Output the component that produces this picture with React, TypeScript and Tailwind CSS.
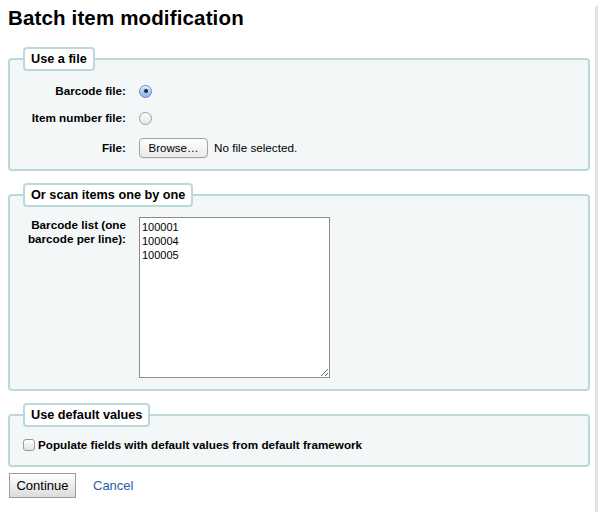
import React from "react";

const font = { fontFamily: '"Liberation Sans", Arial, Helvetica, sans-serif' };

function Legend({ children }: { children: React.ReactNode }) {
  return (
    <legend className="ml-0 rounded-[4px] border-2 border-[#b9d9da] bg-white px-[6px] py-[3px] text-[12.7px] font-bold leading-[14px] text-black">
      {children}
    </legend>
  );
}

function Radio({ checked }: { checked?: boolean }) {
  if (checked) {
    return (
      <span className="flex h-[13px] w-[13px] items-center justify-center rounded-full border border-[#5d86c9] bg-gradient-to-b from-[#cfe0f7] to-[#8fb5ea] shadow-[inset_0_1px_1px_rgba(255,255,255,0.8)]">
        <span className="h-[4px] w-[4px] rounded-full bg-[#1d2a3d]" />
      </span>
    );
  }
  return (
    <span className="block h-[13px] w-[13px] rounded-full border border-[#9b9b9b] bg-gradient-to-b from-[#ffffff] to-[#e6e6e6]" />
  );
}

export default function App() {
  return (
    <div
      className="min-h-[512px] w-[598px] border-r-[3px] border-[#e3e3e3] bg-white pl-[8px] pr-[5px] text-black"
      style={font}
    >
      <h1 className="mt-[6px] text-[20.5px] font-bold leading-[24px] tracking-[0.15px]">
        Batch item modification
      </h1>

      {/* Use a file */}
      <fieldset className="mt-[17px] rounded-[4px] border-2 border-[#b9d9da] bg-[#f3f7f8] pb-[11px] pl-[13px] pr-[13px] pt-[13px]">
        <Legend>Use a file</Legend>
        <div className="grid grid-cols-[103px_1fr] items-center gap-x-[13px] gap-y-[13px] text-[11.7px] leading-[14px]">
          <label className="text-right font-bold">Barcode file:</label>
          <div className="flex h-[13px] items-center">
            <Radio checked />
          </div>
          <label className="text-right font-bold">Item number file:</label>
          <div className="flex h-[13px] items-center">
            <Radio />
          </div>
          <label className="text-right font-bold">File:</label>
          <div className="flex items-center gap-[6px]">
            <span className="flex h-[20px] w-[69px] items-center justify-center rounded-[4px] border border-[#a3a3a3] bg-gradient-to-b from-[#ffffff] to-[#e9e9e9] text-[11.5px] shadow-[0_1px_0_rgba(0,0,0,0.05)]">
              Browse…
            </span>
            <span className="text-[11.7px]">No file selected.</span>
          </div>
        </div>
      </fieldset>

      {/* Or scan items one by one */}
      <fieldset className="mt-[12px] rounded-[4px] border-2 border-[#b9d9da] bg-[#f3f7f8] pb-[11px] pl-[13px] pr-[13px] pt-[10px]">
        <Legend>Or scan items one by one</Legend>
        <div className="grid grid-cols-[103px_1fr] items-start gap-x-[13px] text-[11.7px] leading-[14px]">
          <label className="pt-[1px] text-right font-bold">
            Barcode list (one barcode per line):
          </label>
          <textarea
            className="h-[161px] w-[191px] resize border border-[#8c8c8c] bg-white px-[2px] py-[2px] text-[11px] leading-[14px] text-black outline-none"
            style={font}
            defaultValue={"100001\n100004\n100005"}
          />
        </div>
      </fieldset>

      {/* Use default values */}
      <fieldset className="mt-[12px] rounded-[4px] border-2 border-[#b9d9da] bg-[#f3f7f8] pb-[13px] pl-[13px] pr-[13px] pt-[11px]">
        <Legend>Use default values</Legend>
        <label className="flex items-center gap-[3px] text-[11.7px] font-bold leading-[14px]">
          <span className="block h-[12px] w-[12px] rounded-[3px] border border-[#9b9b9b] bg-gradient-to-b from-[#ffffff] to-[#e4e4e4]" />
          Populate fields with default values from default framework
        </label>
      </fieldset>

      <div className="mt-[6px] flex items-center">
        <span className="ml-[1px] flex h-[25px] w-[67px] items-center justify-center border border-[#9d9d9d] bg-gradient-to-b from-[#ffffff] to-[#dcdcdc] text-[13px]">
          Continue
        </span>
        <a className="ml-[17px] text-[13px] text-[#1f5ea8]" href="#">
          Cancel
        </a>
      </div>
    </div>
  );
}
